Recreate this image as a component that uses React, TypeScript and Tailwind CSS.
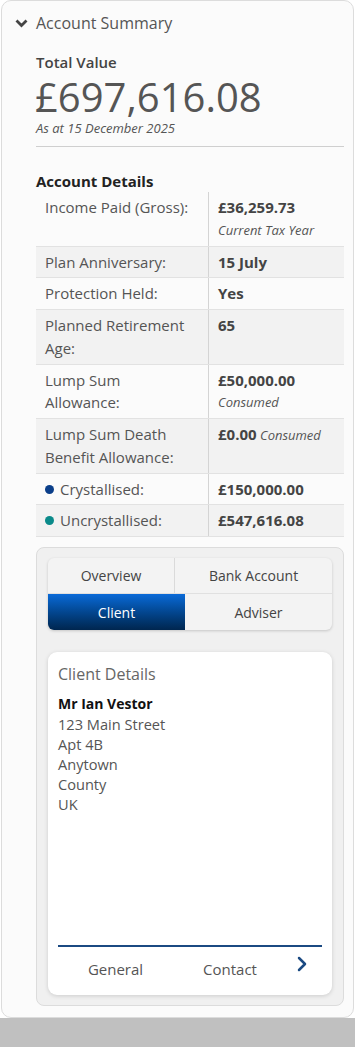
import { ChevronRight } from 'lucide-react';

type Row = {
  label: string;
  value: string;
  note?: string;
  inlineNote?: boolean;
  dot?: string;
};

const rows: Row[] = [
  { label: 'Income Paid (Gross):', value: '£36,259.73', note: 'Current Tax Year' },
  { label: 'Plan Anniversary:', value: '15 July' },
  { label: 'Protection Held:', value: 'Yes' },
  { label: 'Planned Retirement Age:', value: '65' },
  { label: 'Lump Sum Allowance:', value: '£50,000.00', note: 'Consumed' },
  { label: 'Lump Sum Death Benefit Allowance:', value: '£0.00', note: 'Consumed', inlineNote: true },
  { label: 'Crystallised:', value: '£150,000.00', dot: 'bg-[#0b3f8a]' },
  { label: 'Uncrystallised:', value: '£547,616.08', dot: 'bg-[#0a8a8a]' },
];

const address = ['123 Main Street', 'Apt 4B', 'Anytown', 'County', 'UK'];

export default function App() {
  return (
    <div className="w-[355px] h-[1047px] bg-white flex flex-col text-[#555]" style={{ fontFamily: '"Open Sans", "Liberation Sans", sans-serif' }}>
      <div className="mx-[1px] h-[1018px] bg-[#fbfbfb] border border-[#dcdcdc] rounded-[10px] flex flex-col">
        <div className="flex items-center h-[44px] pl-[13px] gap-[8px]">
          <svg width="13" height="9" viewBox="0 0 13 9" className="text-[#444]">
            <polyline points="1.5,1.5 6.5,6.5 11.5,1.5" fill="none" stroke="currentColor" strokeWidth="2.8" />
          </svg>
          <span className="text-[16px] text-[#555]">Account Summary</span>
        </div>

        <div className="px-[34px] pr-[9px]">
          <div className="mt-[7px] text-[15px] font-semibold text-[#444] leading-[20px]">Total Value</div>
          <div className="text-[40px] leading-[50px] text-[#555] -ml-[1px]">£697,616.08</div>
          <div className="text-[13px] italic leading-[16px] text-[#555] -mt-[2px]">As at 15 December 2025</div>
          <div className="mt-[10px] border-t border-[#cfcfcf]" />

          <div className="mt-[24px] text-[15px] font-bold text-[#222] leading-[20px]">Account Details</div>
          <div className="mt-[1px]">
            {rows.map((r, i) => (
              <div
                key={r.label}
                className={`flex border-b border-[#e2e2e2] ${i % 2 === 1 ? 'bg-[#f2f2f2]' : ''}`}
              >
                <div className="w-[173px] border-r border-[#d4d4d4] pl-[9px] pr-[12px] py-[4px] text-[15px] leading-[22.75px] text-[#555] flex items-start">
                  {r.dot && <span className={`w-[9px] h-[9px] rounded-full mt-[7px] mr-[6px] shrink-0 ${r.dot}`} />}
                  <span>{r.label}</span>
                </div>
                <div className="flex-1 pl-[9px] py-[4px] text-[15px] leading-[22.75px]">
                  <span className="font-bold text-[#444]">{r.value}</span>
                  {r.note && r.inlineNote && <span className="italic text-[13px] text-[#555]"> {r.note}</span>}
                  {r.note && !r.inlineNote && <div className="italic text-[13px] text-[#555]">{r.note}</div>}
                </div>
              </div>
            ))}
          </div>

          <div className="mt-[10px] bg-[#f0f0f0] border border-[#dcdcdc] rounded-[8px] px-[11px] pt-[10px] pb-[10px]">
            <div className="rounded-[6px] overflow-hidden shadow-[0_1px_3px_rgba(0,0,0,0.18)] bg-[#f3f3f3] text-[14px] text-[#444]">
              <div className="flex h-[36px] border-b border-[#e0e0e0]">
                <div className="w-[127px] border-r border-[#dadada] flex items-center justify-center">Overview</div>
                <div className="flex-1 flex items-center justify-center">Bank Account</div>
              </div>
              <div className="flex h-[36px]">
                <div className="w-[137px] flex items-center justify-center text-white bg-gradient-to-b from-[#0a6ad8] to-[#00264f]">Client</div>
                <div className="flex-1 flex items-center justify-center">Adviser</div>
              </div>
            </div>

            <div className="mt-[22px] bg-white rounded-[9px] shadow-[0_1px_4px_rgba(0,0,0,0.15)] h-[343px] flex flex-col px-[10px]">
              <div className="pt-[10px] text-[16px] leading-[24px] text-[#666]">Client Details</div>
              <div className="mt-[8px] text-[14px] leading-[20px] font-bold text-[#111]">Mr Ian Vestor</div>
              {address.map(line => (
                <div key={line} className="text-[14.6px] leading-[20px] text-[#555]">{line}</div>
              ))}
              <div className="mt-auto border-t-2 border-[#1b4a82]" />
              <div className="flex items-start h-[48px] pt-[11px] text-[15px] leading-[22px] text-[#555]">
                <div className="w-[115px] text-center">General</div>
                <div className="w-[114px] text-center">Contact</div>
                <ChevronRight size={24} strokeWidth={2.5} className="ml-[3px] -mt-[6px] text-[#1b4a82]" />
              </div>
            </div>
          </div>
        </div>
      </div>
      <div className="flex-1 bg-[#c0c0c0]" />
    </div>
  );
}
